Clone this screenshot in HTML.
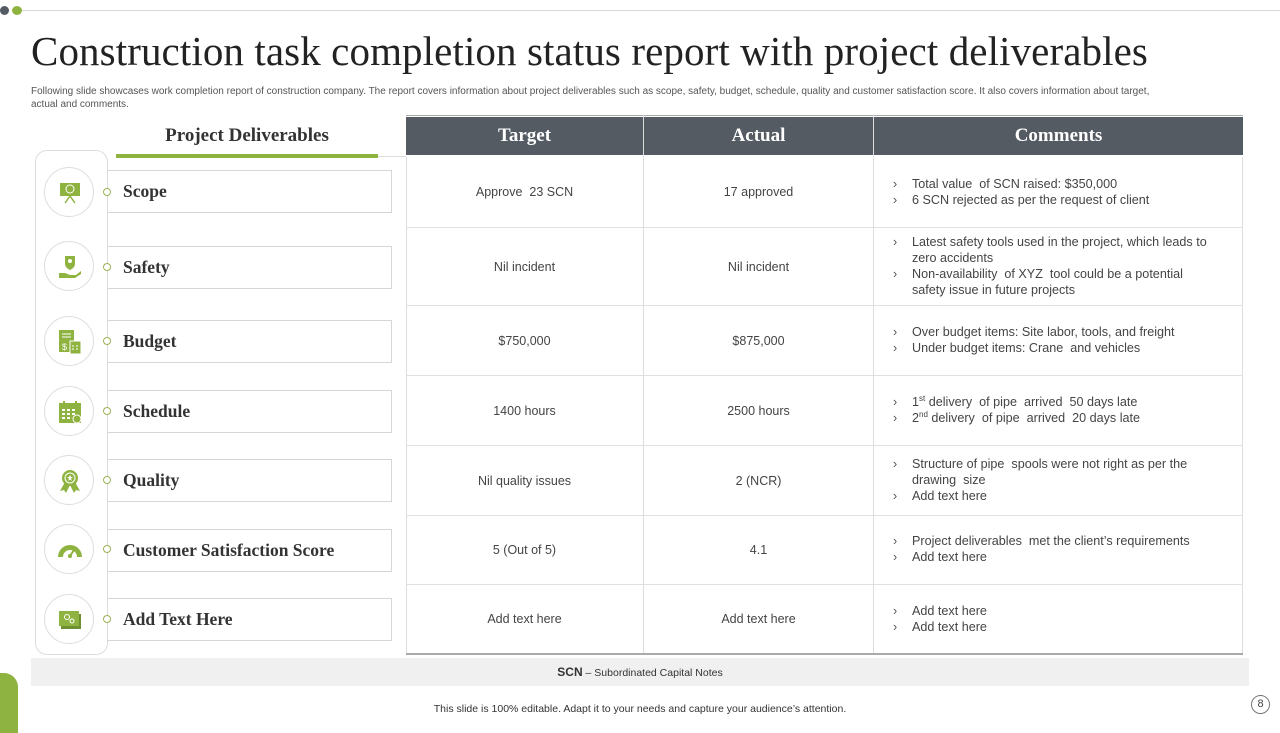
<!DOCTYPE html>
<html><head><meta charset="utf-8"><style>
*{margin:0;padding:0;box-sizing:border-box}
body{width:1280px;height:720px;background:#fff;position:relative;overflow:hidden;font-family:"Liberation Sans",sans-serif;color:#404040}
.a{position:absolute}
.title{left:31px;top:27px;font-family:"Liberation Serif",serif;font-size:41px;color:#222;white-space:nowrap;letter-spacing:0.1px}
.sub{left:31px;top:85px;width:1140px;font-size:10px;line-height:13px;color:#555}
.pd{left:116px;top:125px;width:262px;text-align:center;font-family:"Liberation Serif",serif;font-weight:bold;font-size:19px;color:#333}
.lab{left:107px;width:285px;height:43px;border:1px solid #d6d6d6;border-left:none;font-family:"Liberation Serif",serif;font-weight:bold;font-size:17.5px;color:#333;padding-left:16px;line-height:41px}
.ic{left:44px;width:50px;height:50px;border:1px solid #ddd;border-radius:50%;background:#fff}
.ic svg{position:absolute;left:12px;top:12px}
.dot{left:103px;width:8px;height:8px;border:1px solid #9ab35a;border-radius:50%;background:#fff}
.hd{top:117px;height:38px;background:#545b63;color:#fff;font-family:"Liberation Serif",serif;font-weight:bold;font-size:19px;text-align:center;line-height:38px}
.cell{font-size:12.5px;color:#444;text-align:center;display:flex;align-items:center;justify-content:center}
.cm{left:893px;font-size:12.6px;line-height:16px;color:#444}
.cm div{position:relative;padding-left:19px}
.cm div:before{content:"›";position:absolute;left:0;color:#555}
sup{font-size:8px;line-height:0}
</style></head><body>
<div class="a" style="left:0;top:6px;width:9px;height:9px;border-radius:50%;background:#545b63"></div>
<div class="a" style="left:12px;top:6px;width:10px;height:9px;border-radius:50%;background:#8fb340"></div>
<div class="a" style="left:22px;top:10px;width:1258px;height:1px;background:#d8d8d8"></div>
<div class="a title">Construction task completion status report with project deliverables</div>
<div class="a sub">Following slide showcases work completion report of construction company. The report covers information about project deliverables such as scope, safety, budget, schedule, quality and customer satisfaction score. It also covers information about target, actual and comments.</div>

<div class="a pd">Project Deliverables</div>
<div class="a" style="left:116px;top:154px;width:262px;height:4px;background:#8fb340"></div>
<div class="a" style="left:378px;top:156px;width:28px;height:1px;background:#ddd"></div>
<div class="a" style="left:35px;top:150px;width:73px;height:505px;border:1px solid #ddd;border-radius:12px"></div>

<div class="a lab" style="top:170px">Scope</div>
<div class="a lab" style="top:246px">Safety</div>
<div class="a lab" style="top:320px">Budget</div>
<div class="a lab" style="top:390px">Schedule</div>
<div class="a lab" style="top:459px">Quality</div>
<div class="a lab" style="top:529px">Customer Satisfaction Score</div>
<div class="a lab" style="top:598px">Add Text Here</div>

<div class="a dot" style="top:188px"></div>
<div class="a dot" style="top:263px"></div>
<div class="a dot" style="top:337px"></div>
<div class="a dot" style="top:407px"></div>
<div class="a dot" style="top:476px"></div>
<div class="a dot" style="top:545px"></div>
<div class="a dot" style="top:615px"></div>

<div class="a ic" style="top:167px"><svg width="26" height="26" viewBox="0 0 26 26"><rect x="3" y="3" width="20" height="13" fill="#8fb340"/><circle cx="13" cy="9" r="4" fill="none" stroke="#fff" stroke-width="1"/><path d="M13 16 L8 23 M13 16 L18 23" stroke="#8fb340" stroke-width="1.5"/></svg></div>
<div class="a ic" style="top:241px"><svg width="26" height="26" viewBox="0 0 26 26"><path d="M8 2h10v8c0 4-5 6-5 6s-5-2-5-6z" fill="#8fb340"/><circle cx="13" cy="7" r="2" fill="#fff"/><path d="M2 19h6l5 2h6l5-4v3l-6 4H2z" fill="#8fb340"/></svg></div>
<div class="a ic" style="top:316px"><svg width="26" height="26" viewBox="0 0 26 26"><rect x="2" y="1" width="15" height="22" fill="#8fb340"/><path d="M5 5h9M5 8h9" stroke="#fff"/><text x="5" y="21" font-size="9" fill="#fff" font-family="Liberation Sans">$</text><rect x="13" y="12" width="11" height="13" fill="#8fb340" stroke="#fff"/><path d="M15 17h2M19 17h2M15 20h2M19 20h2" stroke="#fff"/></svg></div>
<div class="a ic" style="top:386px"><svg width="26" height="26" viewBox="0 0 26 26"><rect x="2" y="4" width="22" height="20" fill="#8fb340"/><path d="M7 2v4M19 2v4" stroke="#8fb340" stroke-width="2"/><path d="M5 11h3M10 11h3M15 11h3M5 15h3M10 15h3M15 15h3M5 19h3M10 19h3" stroke="#fff" stroke-width="2"/><circle cx="20" cy="20" r="4" fill="#8fb340" stroke="#fff"/></svg></div>
<div class="a ic" style="top:455px"><svg width="26" height="26" viewBox="0 0 26 26"><path d="M8 14l-5 9 4-1 2 3 4-8zM18 14l5 9-4-1-2 3-4-8z" fill="#8fb340"/><circle cx="13" cy="10" r="8" fill="#8fb340"/><circle cx="13" cy="10" r="5" fill="none" stroke="#fff"/><path d="M13 7l1 2h2l-2 1.5 1 2.5-2-1.5-2 1.5 1-2.5-2-1.5h2z" fill="#fff"/></svg></div>
<div class="a ic" style="top:524px"><svg width="26" height="26" viewBox="0 0 26 26"><path d="M1 20a12 12 0 0 1 24 0h-5a7 7 0 0 0-14 0z" fill="#8fb340"/><path d="M13 19l4-6" stroke="#8fb340" stroke-width="2"/><circle cx="13" cy="19" r="2" fill="#8fb340"/></svg></div>
<div class="a ic" style="top:594px"><svg width="26" height="26" viewBox="0 0 26 26"><rect x="4" y="7" width="20" height="15" fill="#6f9030"/><rect x="2" y="4" width="20" height="15" fill="#8fb340"/><circle cx="10" cy="10" r="2.5" fill="none" stroke="#fff"/><circle cx="15" cy="14" r="2" fill="none" stroke="#fff"/></svg></div>

<div class="a" style="left:406px;top:115px;width:837px;height:1px;background:#aaa"></div>
<div class="a hd" style="left:406px;width:237px">Target</div>
<div class="a hd" style="left:644px;width:229px">Actual</div>
<div class="a hd" style="left:874px;width:369px">Comments</div>
<div class="a" style="left:406px;top:157px;width:1px;height:497px;background:#ddd"></div>
<div class="a" style="left:643px;top:115px;width:1px;height:539px;background:#ddd"></div>
<div class="a" style="left:873px;top:115px;width:1px;height:539px;background:#ddd"></div>
<div class="a" style="left:1242px;top:157px;width:1px;height:497px;background:#ddd"></div>
<div class="a" style="left:406px;top:227px;width:837px;height:1px;background:#e0e0e0"></div>
<div class="a" style="left:406px;top:305px;width:837px;height:1px;background:#e0e0e0"></div>
<div class="a" style="left:406px;top:375px;width:837px;height:1px;background:#e0e0e0"></div>
<div class="a" style="left:406px;top:445px;width:837px;height:1px;background:#e0e0e0"></div>
<div class="a" style="left:406px;top:515px;width:837px;height:1px;background:#e0e0e0"></div>
<div class="a" style="left:406px;top:584px;width:837px;height:1px;background:#e0e0e0"></div>
<div class="a" style="left:406px;top:653px;width:837px;height:2px;background:#aaa"></div>

<div class="a cell" style="left:406px;top:157px;width:237px;height:70px">Approve&nbsp; 23 SCN</div>
<div class="a cell" style="left:644px;top:157px;width:229px;height:70px">17 approved</div>
<div class="a cell" style="left:406px;top:228px;width:237px;height:77px">Nil incident</div>
<div class="a cell" style="left:644px;top:228px;width:229px;height:77px">Nil incident</div>
<div class="a cell" style="left:406px;top:306px;width:237px;height:69px">$750,000</div>
<div class="a cell" style="left:644px;top:306px;width:229px;height:69px">$875,000</div>
<div class="a cell" style="left:406px;top:376px;width:237px;height:69px">1400 hours</div>
<div class="a cell" style="left:644px;top:376px;width:229px;height:69px">2500 hours</div>
<div class="a cell" style="left:406px;top:446px;width:237px;height:69px">Nil quality issues</div>
<div class="a cell" style="left:644px;top:446px;width:229px;height:69px">2 (NCR)</div>
<div class="a cell" style="left:406px;top:516px;width:237px;height:68px">5 (Out of 5)</div>
<div class="a cell" style="left:644px;top:516px;width:229px;height:68px">4.1</div>
<div class="a cell" style="left:406px;top:585px;width:237px;height:68px">Add text here</div>
<div class="a cell" style="left:644px;top:585px;width:229px;height:68px">Add text here</div>

<div class="a cm" style="top:176px"><div>Total value&nbsp; of SCN raised: $350,000</div><div>6 SCN rejected as per the request of client</div></div>
<div class="a cm" style="top:234px"><div>Latest safety tools used in the project, which leads to<br>zero accidents</div><div>Non-availability&nbsp; of XYZ&nbsp; tool could be a potential<br>safety issue in future projects</div></div>
<div class="a cm" style="top:324px"><div>Over budget items: Site labor, tools, and freight</div><div>Under budget items: Crane&nbsp; and vehicles</div></div>
<div class="a cm" style="top:394px"><div>1<sup>st</sup> delivery&nbsp; of pipe&nbsp; arrived&nbsp; 50 days late</div><div>2<sup>nd</sup> delivery&nbsp; of pipe&nbsp; arrived&nbsp; 20 days late</div></div>
<div class="a cm" style="top:456px"><div>Structure of pipe&nbsp; spools were not right as per the<br>drawing&nbsp; size</div><div>Add text here</div></div>
<div class="a cm" style="top:533px"><div>Project deliverables&nbsp; met the client’s requirements</div><div>Add text here</div></div>
<div class="a cm" style="top:603px"><div>Add text here</div><div>Add text here</div></div>

<div class="a" style="left:31px;top:658px;width:1218px;height:28px;background:#f0f0f0;text-align:center;line-height:28px;font-size:10.5px;color:#333"><b style="font-size:12px">SCN</b> – Subordinated Capital Notes</div>
<div class="a" style="left:0;top:703px;width:1280px;text-align:center;font-size:10.5px;color:#333">This slide is 100% editable. Adapt it to your needs and capture your audience’s attention.</div>
<div class="a" style="left:1251px;top:695px;width:19px;height:19px;border:1px solid #777;border-radius:50%;text-align:center;line-height:17px;font-size:11px;color:#444">8</div>
<div class="a" style="left:-12px;top:673px;width:30px;height:60px;background:#8fb340;border-radius:0 14px 0 0"></div>
</body></html>
